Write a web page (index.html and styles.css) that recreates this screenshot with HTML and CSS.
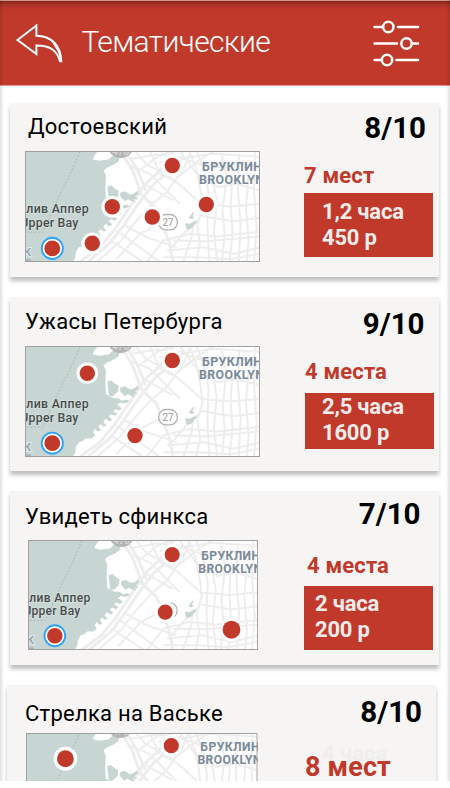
FILE: index.html
```html
<!DOCTYPE html>
<html lang="ru">
<head>
<meta charset="utf-8">
<title>Тематические</title>
<link rel="stylesheet" href="styles.css">
</head>
<body>
<svg class="defs" width="0" height="0" aria-hidden="true">
  <defs>
    <g id="basemap" transform="translate(-25 -60.5) scale(.33333)">
      <rect x="70" y="175" width="720" height="350" fill="#fff"/>
      <g fill="none" stroke="#ededed" stroke-width="6">
        <path stroke-width="9" d="M238 515L300 470L343 418L388 352L432 285L480 240L520 182M262 515L330 458L372 403L418 336L462 280L520 232"/>
        <path stroke-width="9" d="M368 192L398 240L424 312L470 355L486 400L506 450L520 515M384 192L412 238L438 300"/>
        <path d="M290 515L362 452L400 402L452 344L500 305L552 232L572 182"/>
        <path d="M405 182L440 222L500 252L548 290L606 342M388 225L450 250L540 340M440 285L520 330"/>
        <path d="M395 205L470 192L560 202L640 190L778 199M425 235L470 200L515 182M478 215L550 205L610 225L690 215L778 228M450 182L480 250L520 270"/>
        <path d="M330 448L430 515M350 420L480 515M375 405L440 440L530 470M350 505L420 430L475 402M440 515L490 450L570 430L650 438L778 424"/>
        <path d="M572 190L590 240L600 290L608 350L592 405L600 460L588 515M590 182L614 245L626 310L622 400L628 515M635 250L650 330L642 430L652 515M665 195L680 260L668 360L674 430L666 515"/>
        <path d="M696 270L692 350L698 430L688 515M718 190L714 300L722 400L716 515M745 260L738 350L746 450L740 515M765 182L762 300L770 410L762 515"/>
        <path d="M600 340L690 348L778 340M600 376L700 392L778 382M520 450L620 452L778 438M500 480L610 470L700 490L778 472M490 500L590 500L690 506L778 490"/>
        <path d="M540 182L590 250L655 290L710 280L778 300M520 270L590 215L640 182M508 480L550 430L600 382M550 515L575 440L580 400"/>
      </g>
      <path fill="#c8d6d3" d="M70 175H300L284 194L278 206L296 211L326 207L342 192L360 196L356 212L342 222L322 231L311 240L318 256L316 292L318 326L340 338L356 338L366 346L380 342L389 348L374 354L361 351L351 358L366 368L358 375L346 371L339 377L352 384L346 391L332 386L326 393L337 401L329 408L316 400L310 410L320 421L311 423L302 416L295 423L303 434L294 438L284 430L280 440L286 450L274 459L258 458L247 467L237 470L228 484L226 500L218 515H70z"/>
      <path fill="#c8d6d3" d="M322 289L333 284L347 296L356 300L354 318L338 332L327 331zM360 307L375 302L390 312L400 310L414 300L416 309L405 319L415 326L398 326L408 333L397 333L384 326L374 332L361 318zM555 398L568 400L589 390L590 397L572 416L560 417zM566 382L578 366L584 364L577 377L584 381L575 386z"/>
      <path fill="none" stroke="#aab1b0" stroke-width="3" stroke-dasharray="5 6" d="M240 184L208 256L184 302L152 373L128 425H78"/>
      <circle cx="362" cy="164" r="39" fill="#b4b4b4"/>
      <text class="shield-text" x="362" y="194" text-anchor="middle">478</text>
      <rect x="476" y="372" width="56" height="46" rx="22" fill="#fff" stroke="#b4b4b4" stroke-width="4"/>
      <text class="route" x="504" y="406" text-anchor="middle">27</text>
      <g class="district">
        <text x="606" y="241" textLength="180">БРУКЛИН</text>
        <text x="597" y="281" textLength="195">BROOKLYN</text>
      </g>
      <g class="bay">
        <text x="79" y="369" textLength="187">лив Аппер</text>
        <text x="61" y="410" textLength="174">Upper Bay</text>
      </g>
      <text class="edge" x="71" y="497">К</text>
      <path stroke="#9da6b9" stroke-width="4" d="M78 509H92"/>
    </g>
    <g id="stop"><circle r="10.8" fill="#fff"/><circle r="7.7" fill="#c1392b"/></g>
    <g id="start"><circle r="10.6" fill="#fff" stroke="#2fa4f5" stroke-width="1.9"/><circle r="7.9" fill="#c1392b"/></g>
  </defs>
</svg>

<div class="screen">
  <header class="bar">
    <svg class="back" viewBox="0 0 50 42" width="50" height="42">
      <path d="M2.5 18L21.400 3.500V13.700C36 14 45.500 22.500 46.300 39.200H45C42 29 36 23.500 21.400 23.500V32Z" fill="none" stroke="#fff" stroke-width="2"/>
      <path d="M36 18.500C42 22.500 45.500 28.500 45.800 38.500L42.800 29.500Z" fill="#fff"/>
    </svg>
    <h1 class="title">Тематические</h1>
    <svg class="filters" viewBox="0 0 50 50" width="50" height="50" fill="none" stroke="#fff" stroke-width="2.500" stroke-linecap="round">
      <path d="M3.500 9H11M27 9H47M3.500 25.500H26M42 25.500H47M3.500 42H10M25.500 42H47"/>
      <circle cx="17.300" cy="9" r="5.200"/><circle cx="35.500" cy="25.500" r="5.200"/><circle cx="16" cy="42" r="5.200"/>
    </svg>
  </header>

  <main class="list">
    <article class="card card-dostoevsky">
      <div class="info">
        <h2 class="name">Достоевский</h2>
        <svg class="map" viewBox="0 0 235 111" preserveAspectRatio="none">
          <use href="#basemap"/>
          <use href="#stop" x="147.300" y="14.500"/><use href="#stop" x="87.300" y="55.800"/><use href="#stop" x="127.300" y="66"/><use href="#stop" x="181.300" y="53.500"/><use href="#stop" x="67.300" y="92.300"/><use href="#start" x="27.300" y="97.400"/>
          <rect class="frame" x=".5" y=".5" width="234" height="110"/>
        </svg>
      </div>
      <div class="facts">
        <div class="rating">8/10</div>
        <div class="places">7 мест</div>
        <div class="cost"><span>1,2 часа</span><span>450 р</span></div>
      </div>
    </article>

    <article class="card card-horror">
      <div class="info">
        <h2 class="name">Ужасы Петербурга</h2>
        <svg class="map" viewBox="0 0 235 111" preserveAspectRatio="none">
          <use href="#basemap"/>
          <use href="#stop" x="147.300" y="14.500"/><use href="#stop" x="62.300" y="27.200"/><use href="#stop" x="110" y="89.600"/><use href="#start" x="27.300" y="97.200"/>
          <rect class="frame" x=".5" y=".5" width="234" height="110"/>
        </svg>
      </div>
      <div class="facts">
        <div class="rating">9/10</div>
        <div class="places">4 места</div>
        <div class="cost"><span>2,5 часа</span><span>1600 р</span></div>
      </div>
    </article>

    <article class="card card-sphinx">
      <div class="info">
        <h2 class="name">Увидеть сфинкса</h2>
        <svg class="map" viewBox="0 0 235 111" preserveAspectRatio="none">
          <use href="#basemap"/>
          <use href="#stop" x="147.300" y="14.800"/><use href="#stop" x="140.200" y="72.700"/>
          <circle cx="207.900" cy="90.500" r="11.500" fill="#fff"/><circle cx="207.900" cy="90.500" r="9.100" fill="#c1392b"/>
          <use href="#start" x="27.400" y="96.600"/>
          <rect class="frame" x=".5" y=".5" width="234" height="110"/>
        </svg>
      </div>
      <div class="facts">
        <div class="rating">7/10</div>
        <div class="places">4 места</div>
        <div class="cost"><span>2 часа</span><span>200 р</span></div>
      </div>
    </article>

    <article class="card card-strelka">
      <div class="info">
        <h2 class="name">Стрелка на Ваське</h2>
        <svg class="map" viewBox="0 2 235 111" preserveAspectRatio="none">
          <use href="#basemap"/>
          <use href="#stop" x="147.500" y="14.800"/>
          <circle cx="40" cy="28" r="12" fill="#fff"/><circle cx="40" cy="28" r="8.500" fill="#c1392b"/>
          <rect class="frame" x=".5" y="2.500" width="234" height="110"/>
        </svg>
      </div>
      <div class="facts">
        <div class="rating">8/10</div>
        <div class="ghost">4 часа</div>
        <div class="places">8 мест</div>
      </div>
    </article>
  </main>
</div>
</body>
</html>
```
FILE: styles.css
```css
* { box-sizing: border-box; }
body {
  margin: 0;
  background: #fff;
  font-family: Roboto, "Noto Sans", sans-serif;
  color: #000;
}
.defs { display: block; }
.screen {
  position: relative;
  width: 450px;
  height: 781px;
  overflow: hidden;
}
.screen::after {
  content: "";
  position: absolute;
  inset: 0;
  pointer-events: none;
  background:
    linear-gradient(to right, rgba(0,0,0,.12), transparent 4px),
    linear-gradient(to left, rgba(0,0,0,.12), transparent 4px);
}
.bar {
  display: flex;
  align-items: flex-start;
  height: 86px;
  padding: 21px 29.5px 0 15px;
  border-top: 1px solid #d3938c;
  border-bottom: 1px solid #e79990;
  background: linear-gradient(rgba(0,0,0,.32), rgba(0,0,0,.1) 4px, transparent 9px), #c1392b;
}
.title {
  margin: 0 0 0 16.5px;
  font-size: 30px;
  letter-spacing: -.6px;
  font-weight: 300;
  line-height: 39px;
  color: #fff;
}
.filters { margin: -4px 0 0 auto; }
.list {
  display: flex;
  flex-direction: column;
  gap: 20px;
  padding: 17px 11px 0 10px;
}
.card {
  display: flex;
  justify-content: space-between;
  flex: none;
  height: 174px;
  background: #f6f5f4;
  box-shadow: 0 4px 4px rgba(0,0,0,.25);
}
.name {
  margin: 0;
  font-size: 22px;
  font-weight: 400;
  line-height: 26px;
  letter-spacing: .25px;
  white-space: nowrap;
}
.info { padding: 11px 0 0 15px; }
.map {
  display: block;
  width: 235px;
  height: 111px;
  margin-top: 11px;
}
.frame { fill: none; stroke: #a0a0a0; stroke-width: 1; }
.facts {
  position: relative;
  width: 135px;
}
.rating {
  margin-right: 13px;
  font-size: 29.5px;
  font-weight: 700;
  line-height: 34px;
  text-align: right;
}
.places {
  font-size: 22px;
  font-weight: 700;
  line-height: 28px;
  letter-spacing: .15px;
  color: #c1392b;
}
.cost {
  display: flex;
  flex-direction: column;
  width: 128.5px;
  font-size: 22px;
  font-weight: 700;
  line-height: 26px;
  letter-spacing: -.2px;
  color: #f3eceb;
  background: #c1392b;
}
.card-dostoevsky .name { padding-left: 3px; }
.card-dostoevsky .facts { padding-top: 7.6px; }
.card-dostoevsky .places { margin-top: 17.7px; }
.card-dostoevsky .cost { height: 64px; margin-top: 2.7px; padding: 6px 0 0 18px; }

.card-horror .info { padding-top: 12px; }
.card-horror .facts { padding-top: 10.3px; }
.card-horror .rating { margin-right: 14.5px; }
.card-horror .places { margin: 17.2px 0 0 1px; }
.card-horror .cost { height: 56px; margin: 6.5px 0 0 1px; padding: 1px 0 0 17px; }

.card-sphinx .info { padding-top: 12.5px; }
.card-sphinx .map { width: 230px; height: 110px; margin: 10.5px 0 0 2.5px; }
.card-sphinx .facts { padding-top: 6px; }
.card-sphinx .rating { margin-right: 18.5px; }
.card-sphinx .places { margin: 20.5px 0 0 3px; }
.card-sphinx .cost { height: 64px; margin-top: 6px; padding: 5px 0 0 11px; }

.card-strelka { margin: -.5px 3px 0 -3px; }
.card-strelka .info { padding: 16px 0 0 18px; }
.card-strelka .map { width: 231.5px; height: 110px; margin: 6.5px 0 0 1px; }
.card-strelka .facts { padding-top: 10.7px; }
.card-strelka .rating { margin-right: 14px; }
.card-strelka .places { margin: 23px 0 0 4px; font-size: 27px; line-height: 30px; position: relative; }
.ghost {
  position: absolute;
  top: 56px;
  left: 21px;
  font-size: 22px;
  font-weight: 700;
  line-height: 26px;
  color: #efeeed;
}

.district { font-size: 37px; font-weight: 700; fill: #7a8a9a; }
.bay { font-size: 37px; font-weight: 500; fill: #454b4b; stroke: #dfe7e5; stroke-width: 3px; paint-order: stroke; }
.edge { font-size: 34px; font-weight: 500; fill: #8f9ab0; stroke: #e4eae9; stroke-width: 6px; paint-order: stroke; }
.route { font-size: 30px; fill: #999; }
.shield-text { font-size: 30px; font-weight: 700; fill: #d6d6d6; }
```
